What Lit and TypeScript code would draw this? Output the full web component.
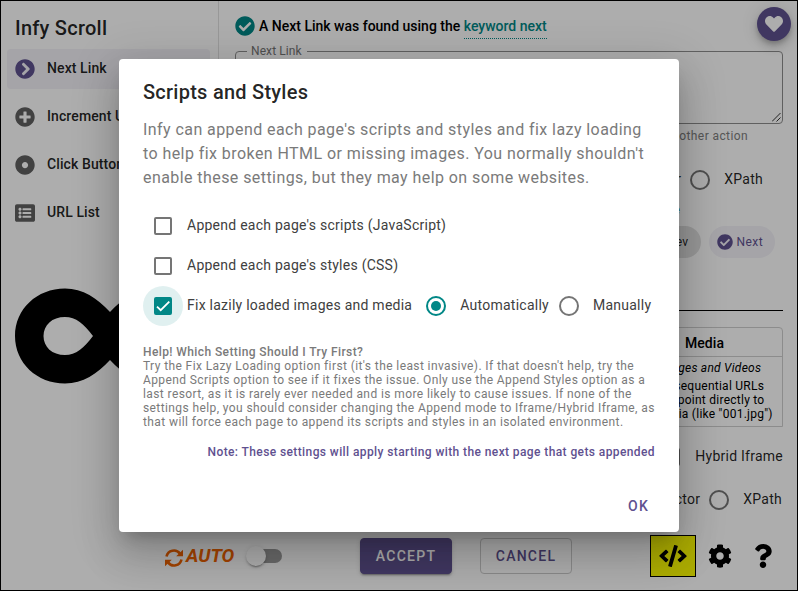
import { LitElement, html, css, svg } from "lit";
import { customElement, property } from "lit/decorators.js";

type Glyph = { w: number; d: string };

const glyphs: Record<string, Glyph> = {
  chevron: { w: 512, d: "M256 8c137 0 248 111 248 248S393 504 256 504 8 393 8 256 119 8 256 8zm113.900 231L234.400 103.500c-9.400-9.400-24.600-9.400-33.900 0l-17 17c-9.400 9.400-9.400 24.600 0 33.900L285.100 256 183.500 357.600c-9.400 9.400-9.400 24.600 0 33.900l17 17c9.400 9.400 24.600 9.400 33.900 0L369.900 273c9.400-9.400 9.400-24.600 0-34z" },
  plus: { w: 512, d: "M256 8C119 8 8 119 8 256s111 248 248 248 248-111 248-248S393 8 256 8zm144 276c0 6.600-5.400 12-12 12h-92v92c0 6.600-5.400 12-12 12h-56c-6.600 0-12-5.400-12-12v-92h-92c-6.600 0-12-5.400-12-12v-56c0-6.600 5.400-12 12-12h92v-92c0-6.600 5.400-12 12-12h56c6.600 0 12 5.400 12 12v92h92c6.600 0 12 5.400 12 12v56z" },
  dot: { w: 512, d: "M256 8C119 8 8 119 8 256s111 248 248 248 248-111 248-248S393 8 256 8zm80 248c0 44.112-35.888 80-80 80s-80-35.888-80-80 35.888-80 80-80 80 35.888 80 80z" },
  list: { w: 512, d: "M464 480H48c-26.510 0-48-21.490-48-48V80c0-26.510 21.490-48 48-48h416c26.510 0 48 21.490 48 48v352c0 26.510-21.490 48-48 48zM128 120c-22.091 0-40 17.909-40 40s17.909 40 40 40 40-17.909 40-40-17.909-40-40-40zm0 96c-22.091 0-40 17.909-40 40s17.909 40 40 40 40-17.909 40-40-17.909-40-40-40zm0 96c-22.091 0-40 17.909-40 40s17.909 40 40 40 40-17.909 40-40-17.909-40-40-40zm288-136v-32c0-6.627-5.373-12-12-12H204c-6.627 0-12 5.373-12 12v32c0 6.627 5.373 12 12 12h200c6.627 0 12-5.373 12-12zm0 96v-32c0-6.627-5.373-12-12-12H204c-6.627 0-12 5.373-12 12v32c0 6.627 5.373 12 12 12h200c6.627 0 12-5.373 12-12zm0 96v-32c0-6.627-5.373-12-12-12H204c-6.627 0-12 5.373-12 12v32c0 6.627 5.373 12 12 12h200c6.627 0 12-5.373 12-12z" },
  check: { w: 512, d: "M504 256c0 136.967-111.033 248-248 248S8 392.967 8 256 119.033 8 256 8s248 111.033 248 248zM227.314 387.314l184-184c6.248-6.248 6.248-16.379 0-22.627l-22.627-22.627c-6.248-6.249-16.379-6.249-22.628 0L216 308.118l-70.059-70.059c-6.248-6.248-16.379-6.248-22.628 0l-22.627 22.627c-6.248 6.248-6.248 16.379 0 22.627l104 104c6.249 6.249 16.379 6.249 22.628.001z" },
  heart: { w: 512, d: "M462.300 62.600C407.500 15.900 326 24.300 275.700 76.200L256 96.500l-19.700-20.300C186.100 24.300 104.500 15.900 49.700 62.600c-62.800 53.600-66.100 149.800-9.900 207.900l193.500 199.800c12.500 12.900 32.800 12.900 45.300 0l193.500-199.800c56.300-58.100 53-154.300-9.800-207.900z" },
  cog: { w: 512, d: "M487.400 315.700l-42.600-24.600c4.300-23.200 4.300-47 0-70.200l42.600-24.600c4.900-2.800 7.100-8.600 5.500-14-11.100-35.600-30-67.800-54.700-94.600-3.800-4.100-10-5.100-14.800-2.300L380.800 110c-17.900-15.400-38.500-27.300-60.800-35.100V25.800c0-5.600-3.900-10.500-9.400-11.700-36.700-8.200-74.300-7.800-109.200 0-5.500 1.200-9.400 6.100-9.400 11.700V75c-22.200 7.900-42.800 19.800-60.800 35.100L88.700 85.500c-4.900-2.800-11-1.900-14.800 2.300-24.700 26.700-43.600 58.900-54.700 94.600-1.700 5.400.6 11.200 5.500 14L67.300 221c-4.300 23.200-4.300 47 0 70.200l-42.600 24.600c-4.900 2.800-7.100 8.600-5.500 14 11.100 35.600 30 67.800 54.700 94.600 3.800 4.100 10 5.100 14.800 2.300l42.600-24.600c17.900 15.400 38.500 27.300 60.800 35.100v49.200c0 5.600 3.900 10.500 9.400 11.700 36.700 8.200 74.300 7.800 109.200 0 5.500-1.200 9.400-6.100 9.400-11.700v-49.200c22.200-7.900 42.800-19.800 60.800-35.100l42.600 24.600c4.900 2.800 11 1.900 14.800-2.300 24.700-26.700 43.600-58.900 54.700-94.600 1.500-5.500-.7-11.300-5.600-14.100zM256 336c-44.100 0-80-35.900-80-80s35.900-80 80-80 80 35.900 80 80-35.900 80-80 80z" },
  question: { w: 384, d: "M202.021 0C122.202 0 70.503 32.703 29.914 91.026c-7.363 10.580-5.093 25.086 5.178 32.874l43.138 32.709c10.373 7.865 25.132 6.026 33.253-4.148 25.049-31.381 43.630-49.449 82.757-49.449 30.764 0 68.816 19.799 68.816 49.631 0 22.552-18.617 34.134-48.993 51.164-35.423 19.860-82.299 44.576-82.299 106.405V320c0 13.255 10.745 24 24 24h72.471c13.255 0 24-10.745 24-24v-5.773c0-42.860 125.268-44.645 125.268-160.627C377.504 66.256 286.902 0 202.021 0zM192 373.459c-38.196 0-69.271 31.075-69.271 69.271 0 38.195 31.075 69.270 69.271 69.270s69.271-31.075 69.271-69.271-31.075-69.270-69.271-69.270z" },
  code: { w: 640, d: "M278.900 511.500l-61-17.700c-6.400-1.800-10-8.500-8.200-14.900L346.200 8.700c1.800-6.400 8.500-10 14.900-8.200l61 17.700c6.400 1.800 10 8.500 8.200 14.900L293.800 503.300c-1.900 6.400-8.500 10.100-14.900 8.200zm-114-112.200l43.500-46.400c4.600-4.900 4.300-12.700-.8-17.200L117 256l90.600-79.700c5.100-4.500 5.500-12.300.8-17.200l-43.500-46.400c-4.500-4.800-12.100-5.100-17-.5L3.800 247.200c-5.100 4.700-5.100 12.800 0 17.500l144.100 135.100c4.900 4.600 12.500 4.400 17-.5zm327.200.6l144.100-135.100c5.100-4.700 5.100-12.800 0-17.500L492.100 112.100c-4.800-4.500-12.400-4.300-17 .5L431.600 159c-4.600 4.900-4.300 12.700.8 17.200L523 256l-90.600 79.700c-5.100 4.500-5.500 12.300-.8 17.200l43.500 46.400c4.500 4.900 12.100 5.100 17 .6z" },
};

@customElement("fa-icon")
class FaIcon extends LitElement {
  @property() name = "check";
  static styles = css`
    :host { display: inline-flex; flex: none; }
    svg { height: 100%; width: 100%; fill: currentColor; display: block; }
  `;
  render() {
    const g = glyphs[this.name];
    return html`<svg viewBox="0 0 ${g.w} 512">${svg`<path d=${g.d}></path>`}</svg>`;
  }
}

@customElement("md-radio")
class MdRadio extends LitElement {
  @property({ type: Boolean, reflect: true }) checked = false;
  static styles = css`
    :host {
      display: grid; place-items: center; flex: none; box-sizing: border-box;
      width: 20px; height: 20px; border-radius: 50%; border: 2px solid #757575;
    }
    :host([checked]) { border-color: #018786; }
    .dot { width: 10px; height: 10px; border-radius: 50%; background: #018786; }
  `;
  render() {
    return this.checked ? html`<span class="dot"></span>` : html``;
  }
}

@customElement("md-checkbox")
class MdCheckbox extends LitElement {
  @property({ type: Boolean, reflect: true }) checked = false;
  @property({ type: Boolean, reflect: true }) focused = false;
  static styles = css`
    :host {
      display: grid; place-items: center; flex: none; width: 40px; height: 40px;
      border-radius: 50%;
    }
    :host([focused]) { background: rgba(1, 135, 134, 0.12); }
    .box {
      box-sizing: border-box; width: 18px; height: 18px; border: 2px solid #757575;
      border-radius: 2px; display: grid; place-items: center;
    }
    :host([checked]) .box { background: #018786; border-color: #018786; }
    svg { width: 14px; height: 14px; fill: none; stroke: #fff; stroke-width: 3.12; }
  `;
  render() {
    return html`<span class="box">
      ${this.checked ? html`<svg viewBox="0 0 24 24"><path d="M1.730 12.910 8.100 19.280 22.790 4.590"></path></svg>` : ""}
    </span>`;
  }
}

@customElement("infy-dialog")
class InfyDialog extends LitElement {
  static styles = css`
    :host {
      position: absolute; inset: 0; z-index: 2; display: grid; place-items: center;
      background: rgba(0, 0, 0, 0.32);
    }
    .surface {
      box-sizing: border-box; width: 560px; height: 473px; background: #fff;
      border-radius: 4px; display: flex; flex-direction: column; padding: 0 24px;
      box-shadow: 0 11px 15px -7px rgba(0, 0, 0, 0.2), 0 24px 38px 3px rgba(0, 0, 0, 0.14),
        0 9px 46px 8px rgba(0, 0, 0, 0.12);
    }
    h2 {
      margin: 17px 0 10px; font-size: 20px; line-height: 32px; font-weight: 500;
      letter-spacing: 0.25px; color: rgba(0, 0, 0, 0.87);
    }
    .intro {
      margin: 0 0 16px; font-size: 16px; line-height: 24px; letter-spacing: 0.43px;
      color: #7a7a7a; white-space: nowrap;
    }
    .row {
      display: flex; align-items: center; height: 40px; font-size: 14px;
      letter-spacing: 0.25px; color: #404040; white-space: nowrap;
    }
    .row label { margin: -2px 0 0 4px; }
    .row md-radio { margin-left: 14px; }
    .row md-radio + label { margin-left: 14px; }
    .row label + md-radio.second { margin-left: 10px; }
    .help {
      margin: 19px 0 0; font-size: 12px; line-height: 14px; letter-spacing: 0.4px;
      color: #7a7a7a; white-space: nowrap;
    }
    .help b { font-weight: 500; }
    .note {
      margin: 14px 0 0; font-size: 12px; line-height: 18px; font-weight: 500;
      letter-spacing: 0.4px; color: #5f5190; text-align: right; white-space: nowrap;
    }
    .actions {
      margin-top: auto; padding-bottom: 8px; height: 36px; display: flex;
      justify-content: flex-end; align-items: center;
    }
    .ok {
      border: 0; background: none; font: 500 14px/36px Roboto, sans-serif; padding: 0 6px;
      letter-spacing: 1.25px; color: #5f5190;
    }
  `;
  render() {
    return html`<section class="surface">
      <h2>Scripts and Styles</h2>
      <p class="intro">
        Infy can append each page's scripts and styles and fix lazy loading<br />
        to help fix broken HTML or missing images. You normally shouldn't<br />
        enable these settings, but they may help on some websites.
      </p>
      <div class="row"><md-checkbox></md-checkbox><label>Append each page's scripts (JavaScript)</label></div>
      <div class="row"><md-checkbox></md-checkbox><label>Append each page's styles (CSS)</label></div>
      <div class="row">
        <md-checkbox checked focused></md-checkbox><label>Fix lazily loaded images and media</label>
        <md-radio checked></md-radio><label>Automatically</label>
        <md-radio class="second"></md-radio><label>Manually</label>
      </div>
      <p class="help">
        <b>Help! Which Setting Should I Try First?</b><br />
        Try the Fix Lazy Loading option first (it's the least invasive). If that doesn't help, try the<br />
        Append Scripts option to see if it fixes the issue. Only use the Append Styles option as a<br />
        last resort, as it is rarely ever needed and is more likely to cause issues. If none of the<br />
        settings help, you should consider changing the Append mode to Iframe/Hybrid Iframe, as<br />
        that will force each page to append its scripts and styles in an isolated environment.
      </p>
      <p class="note">Note: These settings will apply starting with the next page that gets appended</p>
      <div class="actions"><button class="ok">OK</button></div>
    </section>`;
  }
}

@customElement("app-root")
class AppRoot extends LitElement {
  static styles = css`
    :host {
      position: relative; box-sizing: border-box; display: grid; width: 798px; height: 591px;
      grid-template: 531px 58px / 218px 1fr; border: 1px solid #000;
      overflow: hidden; background: #fff; color: #000; font-family: Roboto, sans-serif;
      font-size: 14px; letter-spacing: 0.25px;
    }
    aside { box-sizing: border-box; border-right: 1px solid #e0e0e0; padding: 0 7px 0 6px; }
    h1 {
      margin: 11px 0 5px 8px; font-size: 20px; line-height: 32px; font-weight: 500;
      letter-spacing: 0.25px; color: rgba(0, 0, 0, 0.87);
    }
    .item {
      display: flex; align-items: center; gap: 12px; height: 40px; margin: 0 1px 8px 0;
      padding-left: 8px; border-radius: 4px; font-weight: 500; letter-spacing: 0.1px;
      color: rgba(0, 0, 0, 0.87); white-space: nowrap;
    }
    .item span { margin-top: -2px; }
    .item fa-icon { width: 20px; height: 20px; color: #616161; }
    .item.active { background: #f3f2f8; }
    .item.active fa-icon { color: #5f5190; }
    .logo { display: block; width: 190px; height: 96px; margin: 55px 0 0 8px; }
    main {
      display: flex; flex-direction: column; padding: 0 14px 0 16px; min-width: 0;
    }
    .status { display: flex; align-items: center; gap: 4px; height: 50px; font-weight: 500; letter-spacing: 0; }
    .status fa-icon { width: 20px; height: 20px; color: #018786; }
    .link { color: #018786; border-bottom: 1px dotted #018786; padding-bottom: 4px; }
    .field {
      margin: 0; box-sizing: border-box; height: 81px; margin-top: -8px; padding: 0 4px;
      border: 1px solid #8e8e8e; border-radius: 4px; display: flex; flex-direction: column;
    }
    .field legend { margin-left: 7px; padding: 0 5px 0 4px; font-size: 12px; line-height: 16px; color: #757575; letter-spacing: 0.1px; }
    .grip { width: 9px; height: 9px; margin: 54px -3px 0 auto; stroke: #333; display: block; }
    .helper { font-size: 12px; line-height: 24px; letter-spacing: 0.4px; color: #808080; text-align: right; padding-right: 35px; }
    .line { display: flex; justify-content: flex-end; align-items: center; height: 40px; color: rgba(0, 0, 0, 0.87); gap: 14px; }
    .line span { margin-top: -2px; }
    .line .prior { margin-right: -5px; }
    .line.selectors { margin-top: 12px; padding-right: 20px; }
    .tiny { height: 26px; line-height: 20px; font-size: 12px; text-align: right; padding-right: 103px; color: #018786; }
    .chips { display: flex; justify-content: flex-end; gap: 8px; padding-right: 8px; }
    .chip {
      display: flex; align-items: center; gap: 4px; height: 32px; border-radius: 16px; padding: 0 12px 0 8px;
      background: #e0e0e0; color: rgba(0, 0, 0, 0.87); font-size: 12px; letter-spacing: 0.4px;
    }
    .chip.on { background: #f3f2f8; color: #5f5190; }
    .chip fa-icon { width: 16px; height: 16px; }
    .rule { height: 1px; background: #000; margin: 52px 0 16px; flex: none; }
    .card {
      align-self: flex-end; width: 157px; height: 100px; box-sizing: border-box; flex: none;
      border: 1px solid #cfcfcf; border-radius: 4px 4px 0 0; text-align: center; white-space: nowrap;
      font-size: 12px; line-height: 14px; letter-spacing: 0.25px;
    }
    .card h3 { margin: 0; font-size: 14px; height: 28px; line-height: 30px; font-weight: 500; letter-spacing: 0.1px; border-bottom: 1px solid #cfcfcf; }
    .card em { display: block; margin: 4px 0; padding-left: 10px; }
    .card .media { display: block; padding-left: 8px; }
    .mode { margin-top: 10px; }
    .mode md-checkbox { margin-right: -10px; }
    .elem { margin-top: 3px; padding-right: 1px; }
    footer { grid-column: 1 / -1; box-sizing: border-box; display: flex; align-items: center; padding: 2px 0 12px 164px; }
    .auto { display: flex; align-items: center; gap: 3px; width: 71px; color: #f06400; font: italic 700 19px/20px Roboto, sans-serif; letter-spacing: 0; }
    .auto svg { width: 18px; height: 18px; margin-top: 3px; flex: none; fill: currentColor; }
    .auto .arc { fill: none; stroke: currentColor; stroke-width: 2.6; }
    .switch { width: 36px; height: 20px; margin-left: 10px; display: flex; align-items: center; }
    .thumb { position: relative; width: 20px; height: 20px; border-radius: 50%; background: #fff; flex: none; box-shadow: 0 3px 1px -2px rgba(0, 0, 0, 0.2), 0 2px 2px rgba(0, 0, 0, 0.14), 0 1px 5px rgba(0, 0, 0, 0.12); z-index: 1; }
    .track { width: 26px; height: 14px; margin-left: -10px; border-radius: 0 7px 7px 0; background: #9b9b9b; }
    .btn {
      box-sizing: border-box; width: 92px; height: 36px; border-radius: 4px; padding: 0; border: 1px solid #ccc;
      font: 500 14px/32px Roboto, sans-serif; letter-spacing: 1.25px; color: #5f5190; background: none;
    }
    .btn.primary {
      margin: 0 28px 0 78px; background: #5f5190; border-color: #5f5190; color: #fff;
      box-shadow: 0 3px 1px -2px rgba(0, 0, 0, 0.2), 0 2px 2px rgba(0, 0, 0, 0.14), 0 1px 5px rgba(0, 0, 0, 0.12);
    }
    .code {
      box-sizing: border-box; width: 46px; height: 42px; margin: 0 12px 0 78px; border: 1px solid #000;
      background: #ff0; display: grid; place-items: center;
    }
    .code fa-icon { width: 28px; height: 22px; }
    .cog { width: 24px; height: 24px; margin-right: 22px; }
    .question { width: 18px; height: 24px; }
    .fab {
      position: absolute; top: 6px; right: 6px; width: 34px; height: 34px; border-radius: 50%;
      background: #5f5190; color: #fff; display: grid; place-items: center;
      box-shadow: 0 3px 5px -1px rgba(0, 0, 0, 0.2), 0 6px 10px rgba(0, 0, 0, 0.14), 0 1px 18px rgba(0, 0, 0, 0.12);
    }
    .fab fa-icon { width: 18px; height: 18px; }
    infy-dialog { margin: -1px; }
  `;

  private nav = [
    ["chevron", "Next Link"],
    ["plus", "Increment URL"],
    ["dot", "Click Button"],
    ["list", "URL List"],
  ];

  render() {
    return html`
      <aside>
        <h1>Infy Scroll</h1>
        ${this.nav.map(
          ([icon, label], i) => html`<div class="item ${i === 0 ? "active" : ""}">
            <fa-icon name=${icon}></fa-icon><span>${label}</span>
          </div>`
        )}
        <svg class="logo" viewBox="0 0 190 96">
          <path fill-rule="evenodd" d="M95 24C82 10 68 .5 50 .5C22 .5 0 21 0 48S22 95.500 50 95.500C68 95.500 82 86 95 72C108 86 122 95.500 140 95.500C168 95.500 190 75 190 48S168 .5 140 .5C122 .5 108 10 95 24ZM78 48C69 60 61 67 50 67C37 67 28.500 59 28.500 48S37 29 50 29C61 29 69 36 78 48ZM112 48C121 36 129 29 140 29C153 29 161.500 37 161.500 48S153 67 140 67C129 67 121 60 112 48Z"></path>
        </svg>
      </aside>
      <main>
        <div class="status">
          <fa-icon name="check"></fa-icon>
          <span>A Next Link was found using the <span class="link">keyword next</span></span>
        </div>
        <fieldset class="field">
          <legend>Next Link</legend>
          <svg class="grip" viewBox="0 0 9 9"><path d="M0 8.500 8.500 0M4.500 8.500 8.500 4.500"></path></svg>
        </fieldset>
        <div class="helper">or another action</div>
        <div class="line selectors"><span class="prior">Selector</span><md-radio></md-radio><span>XPath</span></div>
        <div class="tiny">e</div>
        <div class="chips">
          <div class="chip"><span>Prev</span></div>
          <div class="chip on"><fa-icon name="check"></fa-icon><span>Next</span></div>
        </div>
        <div class="rule"></div>
        <div class="card">
          <h3>Media</h3>
          <em>Images and Videos</em>
          <span class="media">For sequential URLs<br />that point directly to<br />a media (like "001.jpg")</span>
        </div>
        <div class="line mode"><md-checkbox></md-checkbox><span>Hybrid Iframe</span></div>
        <div class="line elem"><span class="prior">Selector</span><md-radio></md-radio><span>XPath</span></div>
      </main>
      <footer>
        <div class="auto">
          <svg viewBox="0 0 18 18">
            <path class="arc" d="M1.500 7.500A7.600 7.600 0 0 1 15 4.600M16.500 10.500A7.600 7.600 0 0 1 3 13.400"></path>
            <path d="M18 .8V7.300H11.200ZM0 17.200V10.700H6.800Z"></path>
          </svg>
          <span>AUTO</span>
        </div>
        <div class="switch"><span class="thumb"></span><span class="track"></span></div>
        <button class="btn primary">ACCEPT</button>
        <button class="btn">CANCEL</button>
        <div class="code"><fa-icon name="code"></fa-icon></div>
        <fa-icon class="cog" name="cog"></fa-icon>
        <fa-icon class="question" name="question"></fa-icon>
      </footer>
      <div class="fab"><fa-icon name="heart"></fa-icon></div>
      <infy-dialog></infy-dialog>
    `;
  }
}
